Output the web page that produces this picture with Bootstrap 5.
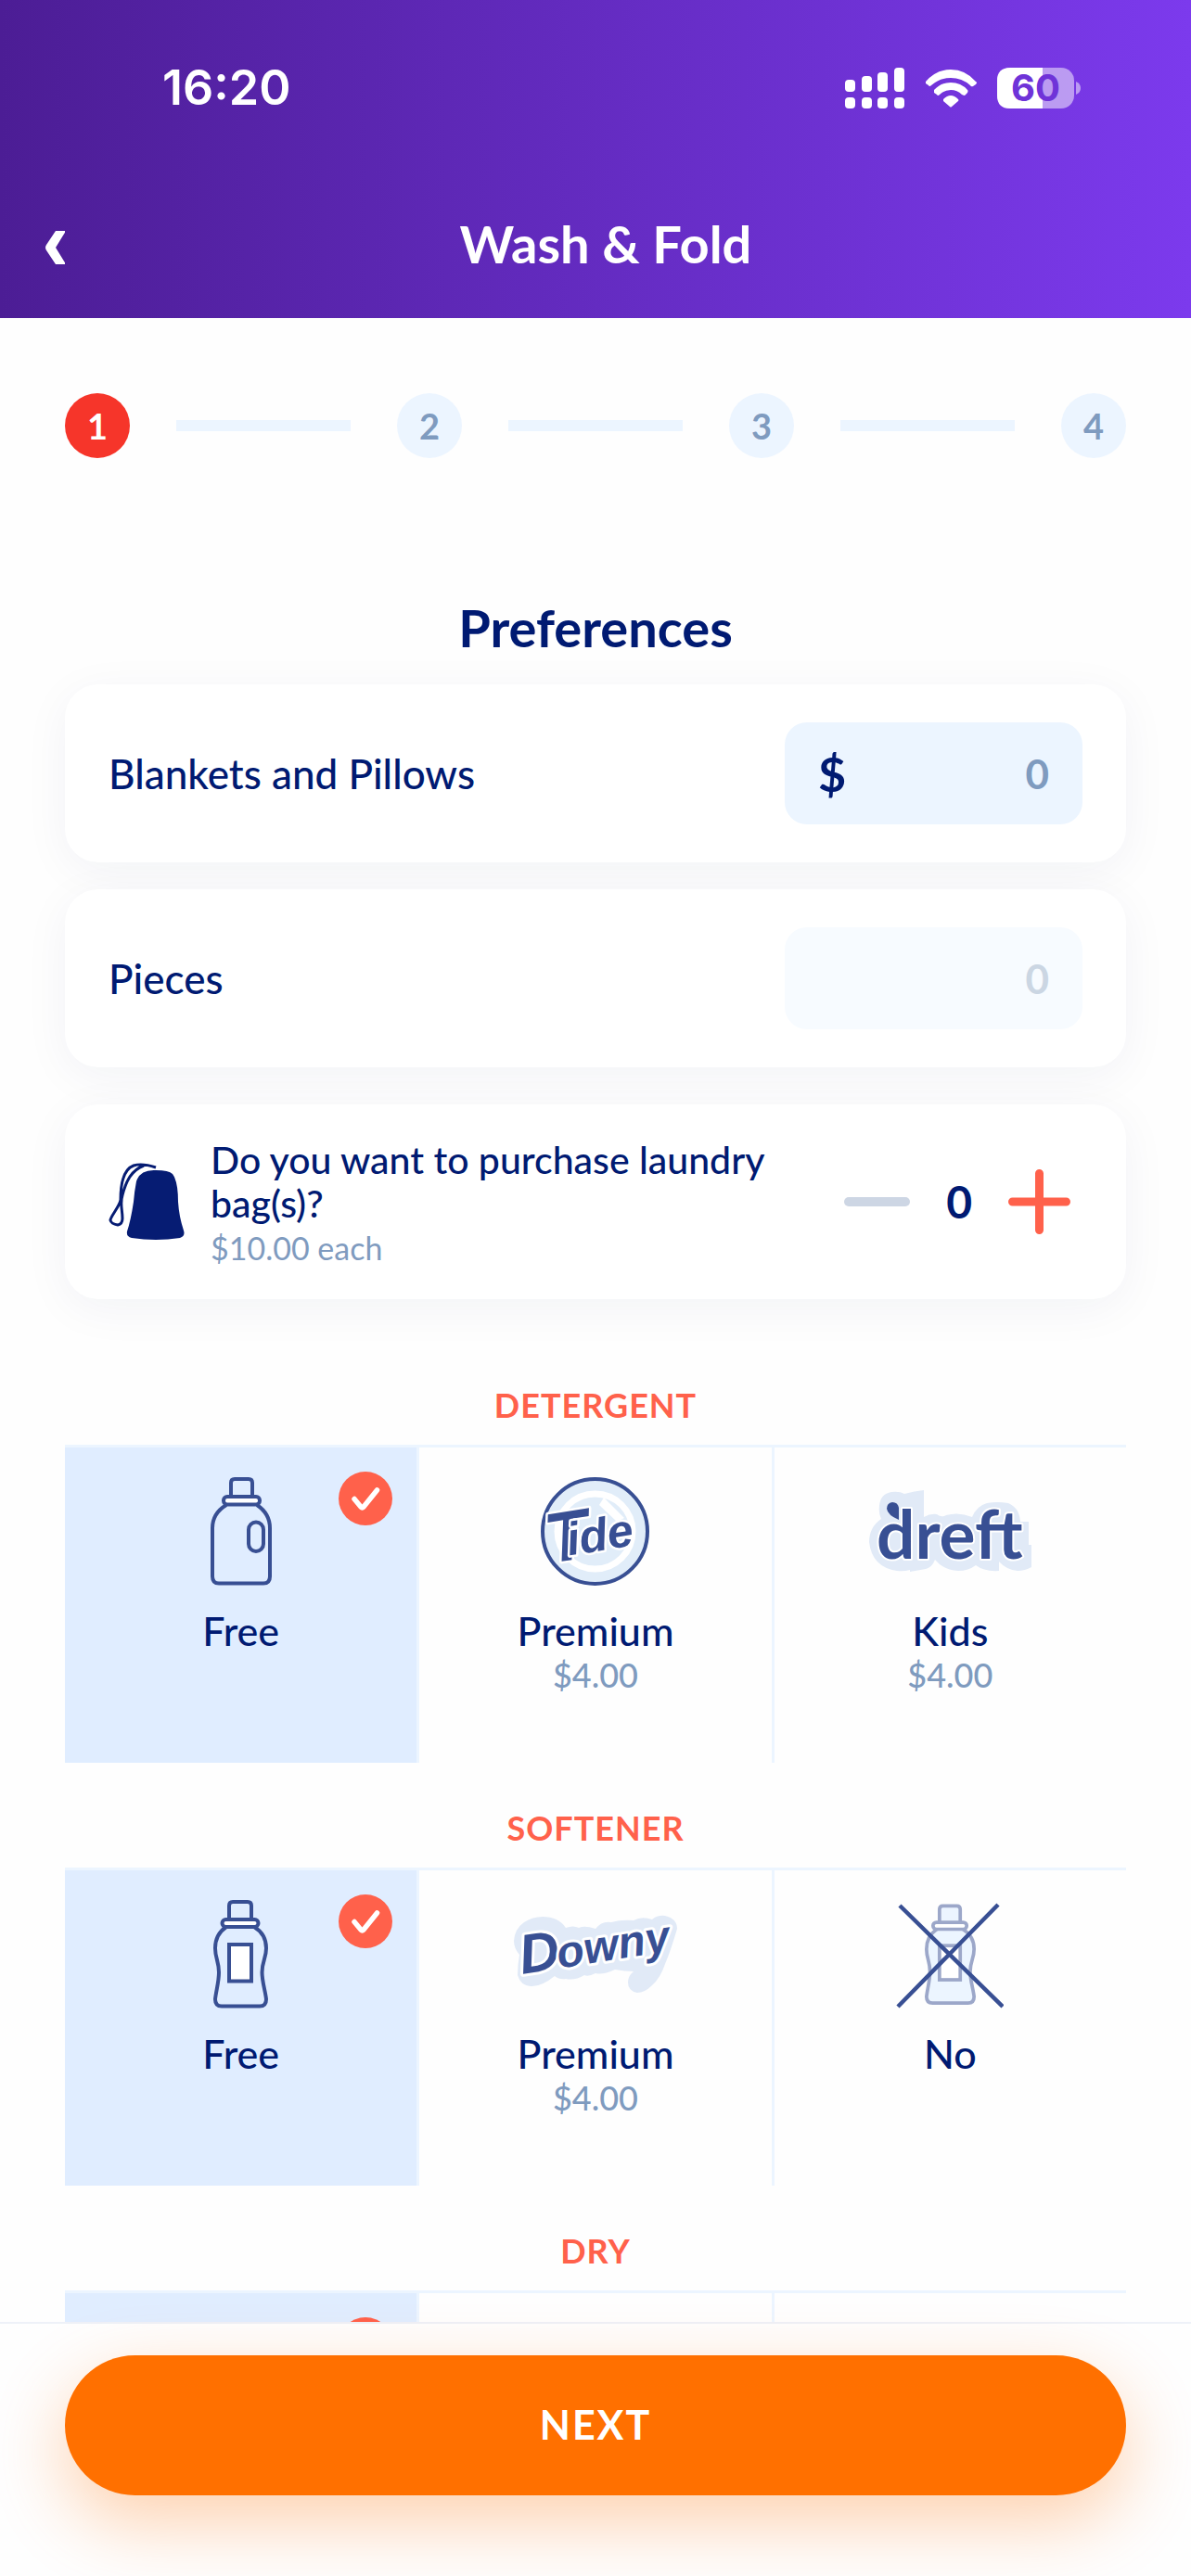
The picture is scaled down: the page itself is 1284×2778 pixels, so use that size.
<!DOCTYPE html>
<html lang="en">
<head>
<meta charset="utf-8">
<meta name="viewport" content="width=device-width, initial-scale=1">
<title>Wash &amp; Fold</title>
<link rel="stylesheet" href="https://cdn.jsdelivr.net/npm/bootstrap@5.3.0/dist/css/bootstrap.min.css">
<style>
  :root { --navy: #001a72; --slate: #7f9bbf; --ice: #ecf5ff; --coral: #ff614b; --ink: #384f93; }
  body { font-family: Lato, "Open Sans", sans-serif; color: var(--navy); background: #fefefe; font-weight: 500; }
  .topbar { background: linear-gradient(90deg, #4c1d95, #7c3aed); color: #fff; }
  .statusbar { font-family: Inter, sans-serif; height: 183px; padding: 6px 119px 0 175px; }
  .clock { font-size: 52px; font-weight: 600; line-height: 80px; }
  .titlebar { height: 160px; padding: 0 48px; }
  .titlebar h1 { font-size: 56px; font-weight: 700; line-height: 66px; }
  .plainbtn { border: 0; background: none; padding: 0; line-height: 0; }
  .gutter { padding-left: 70px; padding-right: 70px; }
  .content { min-height: 0; overflow: hidden; }
  .steps { padding-top: 81px; gap: 50px; margin-bottom: 150px; }
  .step { width: 70px; height: 70px; border-radius: 50%; background: var(--ice); color: var(--slate); font-size: 38px; font-weight: 700; }
  .step.current { background: #f6352a; color: #fff; }
  .stepline { height: 12px; background: var(--ice); }
  .heading { font-size: 56px; font-weight: 700; line-height: 66px; margin-bottom: 28px; }
  .panel { background: #fff; border-radius: 36px; box-shadow: 0 10px 50px rgba(20, 40, 90, .05); }
  .fieldrow { padding: 41px 47px; margin-bottom: 29px; }
  .fieldrow label { font-size: 44px; line-height: 50px; }
  .amount { width: 321px; height: 110px; border-radius: 24px; background: var(--ice); padding: 0 36px; }
  .amount.off { background: #f7fbff; }
  .amount span { font-size: 52px; font-weight: 700; line-height: 66px; }
  .amount input { min-width: 0; border: 0; background: none; padding: 0; outline: 0; text-align: right; font-size: 44px; font-weight: 700; color: var(--slate); }
  .amount.off input { color: #cbd6e3; }
  .bagrow { margin-top: 40px; min-height: 210px; padding: 28px 60px 28px 47px; }
  .bagtext { margin: 0 40px 0 28px; padding-top: 6px; }
  .bagtext p { font-size: 41px; line-height: 47px; }
  .bagtext div { font-size: 34px; line-height: 50px; color: var(--slate); font-weight: 400; }
  .counter { gap: 39px; }
  .counter output { font-size: 48px; font-weight: 700; line-height: 60px; }
  .choices { padding-top: 48px; border: 0; }
  .afterbag { margin-top: 44px; }
  .choices h3 { font-size: 36px; line-height: 44px; font-weight: 700; color: var(--coral); letter-spacing: 1px; margin-bottom: 21px; }
  .options { border-top: 3px solid var(--ice); }
  .option { position: relative; flex: 1 1 0; height: 340px; padding-top: 32px; border-right: 3px solid var(--ice); cursor: pointer; }
  .option:last-child { border-right: 0; }
  .option:has(input:checked) { background: #e0edff; }
  .option .tick { position: absolute; top: 26px; right: 26px; display: none; }
  .option input:checked ~ .tick { display: block; }
  .option b { font-size: 43px; line-height: 50px; font-weight: 500; margin-top: 24px; }
  .option i { font-style: normal; font-size: 36px; line-height: 44px; color: var(--slate); }
  .actions { position: relative; border-top: 2px solid #eef1f8; padding-top: 34px; padding-bottom: 87px; }
  .nextbtn { height: 151px; border: 0; border-radius: 76px; background: #ff7000; color: #fff; font-size: 43px; font-weight: 700; letter-spacing: 2px; box-shadow: 0 28px 80px rgba(255, 112, 0, .32); }
  .nextbtn:hover { background: #f06800; color: #fff; }
  .brand { fill: var(--ink); font-weight: 700; paint-order: stroke; stroke: #fff; stroke-linejoin: round; }
  .slanted { font-family: "Liberation Sans", Arial, sans-serif; font-style: italic; }
</style>
<script src="https://cdn.jsdelivr.net/npm/bootstrap@5.3.0/dist/js/bootstrap.bundle.min.js"></script>
</head>
<body class="vh-100 d-flex flex-column overflow-hidden">

<svg width="0" height="0" class="position-absolute" aria-hidden="true">
  <symbol id="tick" viewBox="0 0 58 58">
    <circle cx="29" cy="29" r="29" fill="#ff614b"/>
    <path d="M17 29.500L24 38Q25.500 39.500 27 38L41.500 20" fill="none" stroke="#fff" stroke-width="5.500" stroke-linecap="round" stroke-linejoin="round"/>
  </symbol>
  <symbol id="softbottle" viewBox="0 0 59 117">
    <path d="M17 21V6Q17 2 21 2H37Q41 2 41 6V21"/>
    <path d="M14 29C5 35 2 43 2 52C2 63 6 66 6 78C6 88 3 98 2 107Q2 114.500 9 114.500H50Q57 114.500 57 107C56 98 52.500 88 52.500 78C52.500 66 57 63 57 52C57 43 54 35 44 29"/>
    <rect x="9.500" y="21" width="39" height="8" rx="4" style="fill:#fff"/>
    <rect x="17" y="48" width="24" height="39.500" style="fill:#fff"/>
  </symbol>
</svg>

<header class="topbar">
  <div class="statusbar d-flex align-items-center justify-content-between">
    <span class="clock">16:20</span>
    <svg width="255" height="46" viewBox="0 0 255 46" role="img" aria-label="60" overflow="visible">
      <g fill="#fff">
        <rect x="1" y="14" width="11" height="13" rx="4"/><rect x="19" y="10" width="11" height="17" rx="4"/><rect x="36" y="6" width="11" height="21" rx="4"/><rect x="54" y="1" width="11" height="26" rx="4"/>
        <rect x="1" y="33" width="11" height="12" rx="4"/><rect x="19" y="33" width="11" height="12" rx="4"/><rect x="36" y="33" width="11" height="12" rx="4"/><rect x="54" y="33" width="11" height="12" rx="4"/>
        <path d="M88 16Q99 3 115 3T142 16Q144 17 142 19L139 21Q137 22 136 20Q127 12 115 12T94 20Q92 22 91 20L88 18Z"/>
        <path d="M97 25Q104 17 115 17T133 25Q134 26 133 28L130 31Q129 31 127 30Q122 25 115 25T103 30Q101 32 100 30L97 28Z"/>
        <path d="M107 35Q115 27 123 35Q124 36 123 37L116 43Q115 44 114 43L107 37Z"/>
      </g>
      <rect x="165" y="1" width="83" height="44" rx="14" fill="#fff" fill-opacity=".5"/>
      <path d="M214 1V45H179Q165 45 165 31V15Q165 1 179 1Z" fill="#fff"/>
      <path d="M250 16Q255 18 255 23T250 30Z" fill="#fff" fill-opacity=".5"/>
      <text x="206.500" y="37" text-anchor="middle" font-size="40" font-weight="700" fill="#6f33d8">60</text>
    </svg>
  </div>
  <div class="titlebar d-flex align-items-center">
    <button class="plainbtn text-white" aria-label="Back">
      <svg width="22" height="44" viewBox="0 0 22 44" fill="currentColor"><path d="M12 8H23L12 26L23 44H12L2 29Q0 26 2 23Z"/></svg>
    </button>
    <h1 class="flex-grow-1 text-center m-0">Wash &amp; Fold</h1>
  </div>
</header>

<main class="content gutter flex-grow-1">
  <div class="steps d-flex align-items-center">
    <div class="step current d-flex align-items-center justify-content-center">1</div>
    <div class="stepline flex-grow-1"></div>
    <div class="step d-flex align-items-center justify-content-center">2</div>
    <div class="stepline flex-grow-1"></div>
    <div class="step d-flex align-items-center justify-content-center">3</div>
    <div class="stepline flex-grow-1"></div>
    <div class="step d-flex align-items-center justify-content-center">4</div>
  </div>

  <h2 class="heading text-center">Preferences</h2>

  <div class="panel fieldrow d-flex align-items-center justify-content-between">
    <label for="blankets">Blankets and Pillows</label>
    <div class="amount d-flex align-items-center">
      <span>$</span><input id="blankets" class="flex-grow-1" type="text" inputmode="decimal" value="0">
    </div>
  </div>
  <div class="panel fieldrow d-flex align-items-center justify-content-between">
    <label for="pieces">Pieces</label>
    <div class="amount off d-flex align-items-center">
      <input id="pieces" class="flex-grow-1" type="text" inputmode="numeric" value="0">
    </div>
  </div>

  <div class="panel bagrow d-flex align-items-center">
    <svg class="flex-shrink-0" width="82" height="84" viewBox="0 0 82 84" aria-hidden="true">
      <path d="M51 8Q34 7 30 20Q28 30 27 42Q24 62 20 74Q19 80 25 81Q51 85 77 81Q83 79 81 73Q76 58 75 42Q75 20 69 12Q65 8 51 8Z" fill="#061c73"/>
      <path d="M51 5Q36 0 27 3C16 7 13 23 13 40C12 47 2 58 2 62Q3 66 10 67Q15 66 15 60C15 50 12 44 15 35C19 19 25 8 38 3" fill="none" stroke="#061c73" stroke-width="3"/>
    </svg>
    <div class="bagtext flex-grow-1">
      <p class="m-0">Do you want to purchase laundry bag(s)?</p>
      <div>$10.00 each</div>
    </div>
    <div class="counter d-flex align-items-center flex-shrink-0">
      <button class="plainbtn" aria-label="Remove a bag"><svg width="71" height="70" viewBox="0 0 71 70"><path d="M5 35H66" stroke="#cdd6e4" stroke-width="10" stroke-linecap="round"/></svg></button>
      <output>0</output>
      <button class="plainbtn" aria-label="Add a bag"><svg width="67" height="70" viewBox="0 0 67 70"><path d="M4.500 35H62.500M33.500 4.500V65.500" stroke="#ff614b" stroke-width="9" stroke-linecap="round"/></svg></button>
    </div>
  </div>

  <section class="choices afterbag">
    <h3 class="text-center">DETERGENT</h3>
    <div class="options d-flex">
      <label class="option d-flex flex-column align-items-center">
        <input class="btn-check" type="radio" name="detergent" checked>
        <svg width="66" height="117" viewBox="0 0 66 117" fill="none" stroke="#384f93" stroke-width="4" aria-hidden="true">
          <path d="M22 21V6Q22 2 26 2H41Q45 2 45 6V21"/>
          <path d="M17 30C7 36 2 45 2 55V107Q2 114.500 9 114.500H57Q64 114.500 64 107V55C64 45 59 36 50 30"/>
          <rect x="14" y="21" width="39" height="8.500" rx="4" fill="#fff"/>
          <rect x="41" y="48.500" width="16" height="31.500" rx="8"/>
        </svg>
        <b>Free</b>
        <svg class="tick" width="58" height="58"><use href="#tick"/></svg>
      </label>
      <label class="option d-flex flex-column align-items-center">
        <input class="btn-check" type="radio" name="detergent">
        <svg width="117" height="117" viewBox="0 0 117 117" overflow="visible">
          <circle cx="58.500" cy="58.500" r="56.500" fill="#e1edf9" stroke="#384f93" stroke-width="4"/>
          <circle cx="58.500" cy="58.500" r="40.500" fill="none" stroke="#fff" stroke-width="7"/>
          <path d="M63 30L68 22L90 44L82 48Z" fill="#fff"/>
          <text class="brand slanted" transform="translate(9 93) rotate(-9)" stroke-width="5" font-size="76">T<tspan font-size="50" dx="-24" dy="-5">ide</tspan></text>
        </svg>
        <b>Premium</b><i>$4.00</i>
        <svg class="tick" width="58" height="58"><use href="#tick"/></svg>
      </label>
      <label class="option d-flex flex-column align-items-center">
        <input class="btn-check" type="radio" name="detergent">
        <svg width="176" height="117" viewBox="0 0 176 117">
          <path d="M12 31Q13 18 25 16Q34 15 39 18Q50 15 60 14V43Q67 39 74 40Q79 44 84 41Q98 37 112 43Q117 31 128 28Q139 26 151 28Q163 33 164 48H173V73H176V97Q169 101 161 101Q149 100 141 91V101Q125 102 116 95Q108 101 97 101Q81 100 72 89Q69 97 62 99L45 102V100Q38 102 31 101Q4 97 1 70Q1 54 14 45Q11 39 12 31Z" fill="#e1eaf7"/>
          <text class="brand" x="9" y="88" font-family="Lato, sans-serif" font-size="73" stroke-width="4">dreft</text>
          <path d="M33 46V33Q32 27 26 27Q20 28 20 34Q21 41 33 46Z" fill="#384f93"/>
        </svg>
        <b>Kids</b><i>$4.00</i>
        <svg class="tick" width="58" height="58"><use href="#tick"/></svg>
      </label>
    </div>
  </section>

  <section class="choices">
    <h3 class="text-center">SOFTENER</h3>
    <div class="options d-flex">
      <label class="option d-flex flex-column align-items-center">
        <input class="btn-check" type="radio" name="softener" checked>
        <svg width="59" height="117" fill="none" stroke="#384f93" stroke-width="4" aria-hidden="true"><use href="#softbottle"/></svg>
        <b>Free</b>
        <svg class="tick" width="58" height="58"><use href="#tick"/></svg>
      </label>
      <label class="option d-flex flex-column align-items-center">
        <input class="btn-check" type="radio" name="softener">
        <svg width="176" height="117" viewBox="0 0 176 117">
          <path d="M11 24Q20 18 31 18Q48 18 56 30Q64 27 70 30Q76 27 88 31Q95 22 105 24Q115 21 129 22Q138 17 149 21Q155 16 163 17Q176 20 176 31Q169 55 163 69Q158 84 149 92Q141 100 133 100Q123 98 123 89Q123 82 129 77Q120 77 109 75Q96 81 88 79Q80 83 76 81Q66 87 56 85Q49 86 44 82Q29 94 18 93Q7 92 4 81Q4 70 6 59Q0 52 0 44Q1 31 11 24Z" fill="#e1eaf7"/>
          <text class="brand slanted" transform="translate(9 80) rotate(-9)" stroke-width="6" font-size="60">D<tspan font-size="48" dx="-3">owny</tspan></text>
        </svg>
        <b>Premium</b><i>$4.00</i>
        <svg class="tick" width="58" height="58"><use href="#tick"/></svg>
      </label>
      <label class="option d-flex flex-column align-items-center">
        <input class="btn-check" type="radio" name="softener">
        <svg width="116" height="117" viewBox="0 0 116 117" aria-hidden="true">
          <svg x="31" y="4" width="55" height="110" fill="#ecf5ff" stroke="#9ca7c9" stroke-width="4"><use href="#softbottle"/></svg>
          <path d="M4 6L115 115M110 5L2 115" stroke="#384f93" stroke-width="4.500"/>
        </svg>
        <b>No</b>
        <svg class="tick" width="58" height="58"><use href="#tick"/></svg>
      </label>
    </div>
  </section>

  <section class="choices">
    <h3 class="text-center">DRY</h3>
    <div class="options d-flex">
      <label class="option"><input class="btn-check" type="radio" name="dry" checked><svg class="tick" width="58" height="58"><use href="#tick"/></svg></label>
      <label class="option"><input class="btn-check" type="radio" name="dry"><svg class="tick" width="58" height="58"><use href="#tick"/></svg></label>
      <label class="option"><input class="btn-check" type="radio" name="dry"><svg class="tick" width="58" height="58"><use href="#tick"/></svg></label>
    </div>
  </section>
</main>

<footer class="actions gutter">
  <button class="btn nextbtn w-100">NEXT</button>
</footer>
</body>
</html>
